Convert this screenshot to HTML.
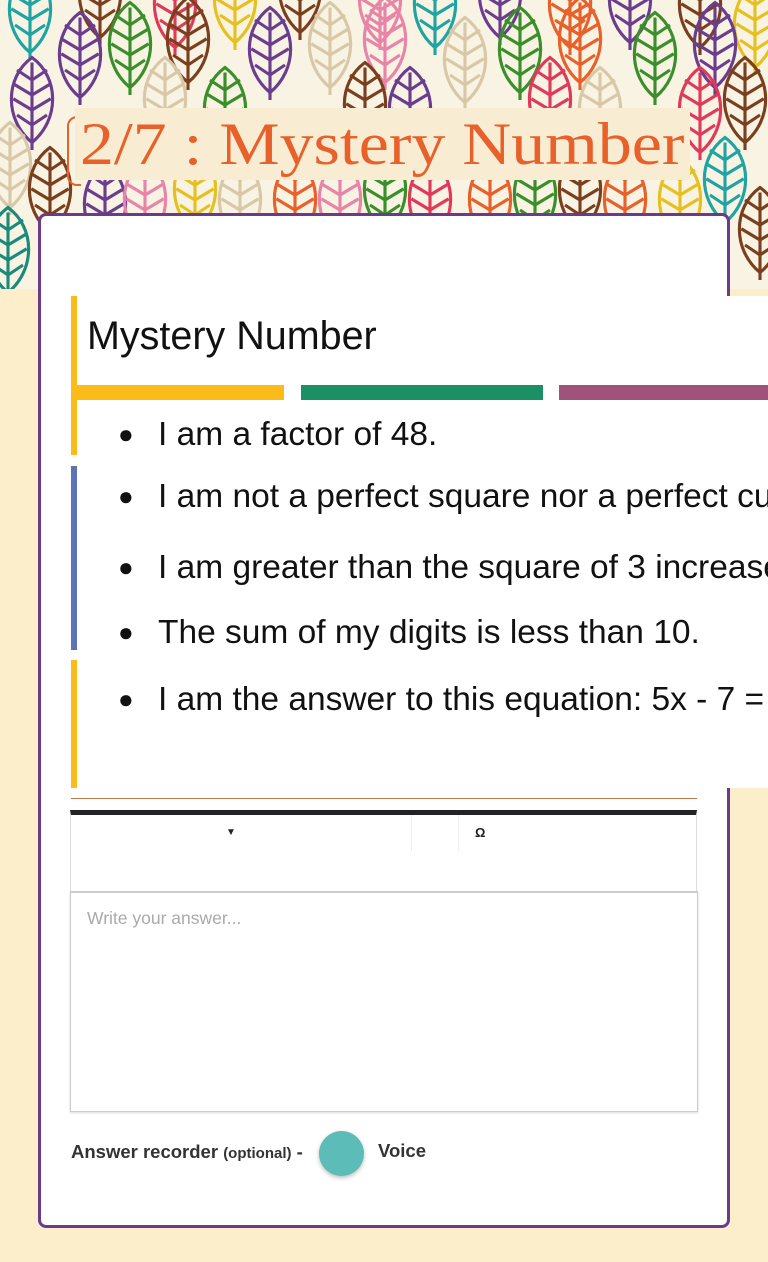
<!DOCTYPE html>
<html><head><meta charset="utf-8"><style>
body{margin:0;width:768px;height:1262px;background:#fdeecb;position:relative;overflow:hidden;font-family:"Liberation Sans",sans-serif}
#bg{position:absolute;left:0;top:0;width:768px;height:289px;background:#f8f3e2;overflow:hidden}
#title{position:absolute;left:75px;top:108px;width:615px;height:72px;background:#f8ecd2;overflow:hidden}
#title span{position:absolute;left:5px;top:0;color:#e8602a;font-family:"Liberation Serif","DejaVu Serif",serif;font-size:60px;line-height:72px;white-space:nowrap;transform:scaleX(1.13);transform-origin:0 0}
#tb{position:absolute;left:67px;top:116px;width:12px;height:66px;border:2px solid #e8602a;border-right:none;border-radius:10px 0 0 10px}
#card{position:absolute;left:38px;top:213px;width:686px;height:1009px;background:#fff;border:3px solid #6b3a8a;border-radius:8px}
#img{position:absolute;left:41px;top:296px;width:727px;height:492px;background:#fff;overflow:hidden}
.bar{position:absolute}
.txt{position:absolute;left:77px;font-size:33.5px;color:#111;white-space:nowrap}
.txt b{font-weight:normal;display:inline-block;width:40px;font-size:26px;vertical-align:2px}
</style></head><body>
<div id="bg"><svg width="768" height="289" viewBox="0 0 768 289">
<defs><g id="L" fill="none" stroke-width="2.5" transform="scale(1.25)"><path d="M0,-34 C22,-18 22,16 0,34 C-22,16 -22,-18 0,-34Z"/><path d="M0,-30 V40 M0,-16 L-12,-24 M0,-16 L12,-24 M0,-4 L-15,-13 M0,-4 L15,-13 M0,8 L-15,-1 M0,8 L15,-1 M0,20 L-12,12 M0,20 L12,12"/></g></defs>
<use href="#L" x="30" y="10" stroke="#1fa3a3"/><use href="#L" x="100" y="-5" stroke="#7a3f1f"/><use href="#L" x="175" y="5" stroke="#e03a5a"/><use href="#L" x="235" y="0" stroke="#e6c020"/><use href="#L" x="300" y="-10" stroke="#7a3f1f"/><use href="#L" x="380" y="0" stroke="#e884a8"/><use href="#L" x="435" y="5" stroke="#1fa3a3"/><use href="#L" x="500" y="-5" stroke="#6a3d8f"/><use href="#L" x="570" y="5" stroke="#e8602a"/><use href="#L" x="630" y="0" stroke="#6a3d8f"/><use href="#L" x="700" y="5" stroke="#7a3f1f"/><use href="#L" x="755" y="25" stroke="#e6c020"/>
<use href="#L" x="80" y="55" stroke="#6a3d8f"/><use href="#L" x="130" y="45" stroke="#3a8f2a"/><use href="#L" x="188" y="40" stroke="#7a3f1f"/><use href="#L" x="270" y="50" stroke="#6a3d8f"/><use href="#L" x="330" y="45" stroke="#d8c8a8"/><use href="#L" x="385" y="40" stroke="#e884a8"/><use href="#L" x="465" y="60" stroke="#d8c8a8"/><use href="#L" x="520" y="50" stroke="#3a8f2a"/><use href="#L" x="580" y="40" stroke="#e8602a"/><use href="#L" x="655" y="55" stroke="#3a8f2a"/><use href="#L" x="715" y="45" stroke="#6a3d8f"/>
<use href="#L" x="32" y="100" stroke="#6a3d8f"/><use href="#L" x="165" y="100" stroke="#d8c8a8"/><use href="#L" x="225" y="110" stroke="#3a8f2a"/><use href="#L" x="365" y="105" stroke="#7a3f1f"/><use href="#L" x="410" y="110" stroke="#6a3d8f"/><use href="#L" x="550" y="100" stroke="#e03a5a"/><use href="#L" x="600" y="110" stroke="#d8c8a8"/><use href="#L" x="700" y="110" stroke="#e03a5a"/><use href="#L" x="745" y="100" stroke="#7a3f1f"/>
<use href="#L" x="10" y="165" stroke="#d8c8a8"/><use href="#L" x="50" y="190" stroke="#7a3f1f"/><use href="#L" x="105" y="205" stroke="#6a3d8f"/><use href="#L" x="145" y="200" stroke="#e884a8"/><use href="#L" x="195" y="190" stroke="#e6c020"/><use href="#L" x="240" y="200" stroke="#d8c8a8"/><use href="#L" x="295" y="200" stroke="#e8602a"/><use href="#L" x="340" y="200" stroke="#e884a8"/><use href="#L" x="385" y="190" stroke="#3a8f2a"/><use href="#L" x="430" y="200" stroke="#e03a5a"/><use href="#L" x="490" y="200" stroke="#e8602a"/><use href="#L" x="535" y="195" stroke="#3a8f2a"/><use href="#L" x="580" y="190" stroke="#7a3f1f"/><use href="#L" x="625" y="200" stroke="#e8602a"/><use href="#L" x="680" y="200" stroke="#e6c020"/><use href="#L" x="725" y="180" stroke="#1fa3a3"/><use href="#L" x="760" y="230" stroke="#7a3f1f"/><use href="#L" x="8" y="250" stroke="#1a8a7a"/>
</svg></div>
<div id="tb"></div>
<div id="title"><span>2/7 : Mystery Number</span></div>
<div id="card"></div>
<div id="img">
<div class="bar" style="left:30px;top:0;width:6px;height:159px;background:#fbbc19"></div>
<div class="bar" style="left:30px;top:170px;width:6px;height:184px;background:#5b73b8"></div>
<div class="bar" style="left:30px;top:364px;width:6px;height:128px;background:#fbbc19"></div>
<div class="bar" style="left:36px;top:89px;width:207px;height:15px;background:#fbbc19"></div>
<div class="bar" style="left:260px;top:89px;width:242px;height:15px;background:#1a9064"></div>
<div class="bar" style="left:518px;top:89px;width:209px;height:15px;background:#a0527a"></div>
<div style="position:absolute;left:46px;top:18px;font-size:39.5px;color:#111;white-space:nowrap">Mystery Number</div>
<div class="txt" style="top:120px"><b>●</b>I am a factor of 48.</div>
<div class="txt" style="top:182px"><b>●</b>I am not a perfect square nor a perfect cube.</div>
<div class="txt" style="top:253px"><b>●</b>I am greater than the square of 3 increased by 2.</div>
<div class="txt" style="top:318px"><b>●</b>The sum of my digits is less than 10.</div>
<div class="txt" style="top:385px"><b>●</b>I am the answer to this equation: 5x - 7 = 53</div>
</div>
<div class="bar" style="left:727px;top:788px;width:3px;height:10px;background:#6b3a8a"></div>
<div class="bar" style="left:71px;top:798px;width:626px;height:1px;background:#c0784a"></div>
<div style="position:absolute;left:70px;top:810px;width:627px;height:82px;border:1px solid #ddd;border-top:5px solid #222;box-sizing:border-box;background:#fff"></div>
<div class="bar" style="left:411px;top:815px;width:1px;height:36px;background:#eee"></div>
<div class="bar" style="left:458px;top:815px;width:1px;height:36px;background:#eee"></div>
<div style="position:absolute;left:226px;top:827px;font-size:10px;color:#222">▼</div>
<div style="position:absolute;left:475px;top:825px;font-size:13px;font-weight:bold;color:#222">Ω</div>
<div style="position:absolute;left:70px;top:891px;width:628px;height:221px;border:1px solid #ccc;border-top:2px solid #ccc;box-sizing:border-box;box-shadow:0 1px 2px rgba(0,0,0,.15);background:#fff"></div>
<div style="position:absolute;left:87px;top:908px;font-size:17.5px;color:#aaa">Write your answer...</div>
<div style="position:absolute;left:71px;top:1141px;font-size:18.5px;font-weight:bold;color:#333;white-space:nowrap">Answer recorder <span style="font-size:15px">(optional)</span> -</div>
<div style="position:absolute;left:319px;top:1131px;width:45px;height:45px;border-radius:50%;background:#5bbcb8;box-shadow:0 2px 4px rgba(0,0,0,.25)"></div>
<div style="position:absolute;left:378px;top:1140px;font-size:18.5px;font-weight:bold;color:#333">Voice</div>
</body></html>
